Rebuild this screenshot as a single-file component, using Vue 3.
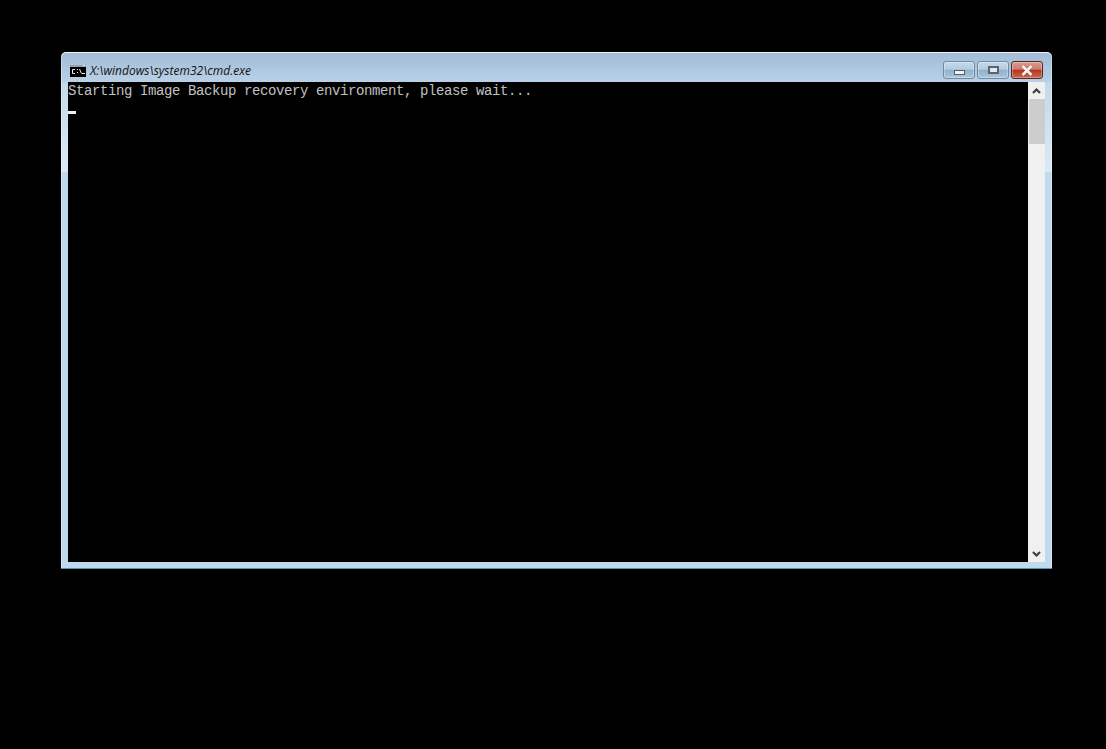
<script setup>
const line = 'Starting Image Backup recovery environment, please wait...'
const title = 'X:\\windows\\system32\\cmd.exe'
</script>

<template>
  <div class="screen">
    <div class="window">
      <div class="titlebar">
        <svg class="appicon" width="16" height="12" viewBox="0 0 16 12">
          <rect x="0" y="0" width="16" height="12" fill="#000" />
          <rect x="0" y="0" width="16" height="2" fill="#9aa2ab" />
          <rect x="13" y="0" width="2" height="1" fill="#e8e8e8" />
          <path d="M5 4.5H2.5v4H5" fill="none" stroke="#eee" stroke-width="1" />
          <path d="M7 4.5h1M7 7.5h1M9.5 4l2 4.5M12 8.5h3" fill="none" stroke="#eee" stroke-width="1" />
        </svg>
        <span class="title">{{ title }}</span>
        <div class="controls">
          <div class="btn minimize"><span class="min-glyph"></span></div>
          <div class="btn maximize"><span class="max-glyph"></span></div>
          <div class="btn close">
            <svg width="16" height="11" viewBox="0 0 16 11">
              <path d="M3.5 1 L12.5 10 M12.5 1 L3.5 10" stroke="#5a4a48" stroke-width="3.6" fill="none" opacity=".45" />
              <path d="M3.5 1 L12.5 10 M12.5 1 L3.5 10" stroke="#f6f2f0" stroke-width="2.6" fill="none" />
            </svg>
          </div>
        </div>
      </div>
      <div class="client">
        <div class="console">
          <div class="text">{{ line }}</div>
          <div class="cursor"></div>
        </div>
        <div class="scrollbar">
          <div class="arrow">
            <svg width="9" height="6" viewBox="0 0 9 6"><path d="M1 5 L4.5 1.5 L8 5" stroke="#404040" stroke-width="2.2" fill="none" /></svg>
          </div>
          <div class="thumb"></div>
          <div class="track"></div>
          <div class="arrow">
            <svg width="9" height="6" viewBox="0 0 9 6"><path d="M1 1 L4.5 4.5 L8 1" stroke="#404040" stroke-width="2.2" fill="none" /></svg>
          </div>
        </div>
      </div>
    </div>
  </div>
</template>

<style>
html, body { margin: 0; background: #000; }
</style>

<style scoped>
.screen {
  width: 1106px;
  height: 749px;
  background: #000;
  padding: 52px 0 0 61px;
  box-sizing: border-box;
  overflow: hidden;
}
.window {
  width: 991px;
  height: 517px;
  box-sizing: border-box;
  padding: 0 7px 6px;
  border-radius: 5px 5px 0 0;
  border-top: 1px solid #eef3f8;
  border-bottom: 1px solid #4f9aa8;
  background: linear-gradient(180deg, #a2bcd8 0, #b9d1e6 29px, #c3d9ea 30px, #dde9f3 118px, #c0daed 120px, #c0daed 100%);
  box-shadow: inset 1px 0 0 rgba(255,255,255,.35), inset -1px 0 0 rgba(255,255,255,.35);
  display: flex;
  flex-direction: column;
}
.titlebar {
  height: 29px;
  flex: none;
  display: flex;
  align-items: center;
  box-sizing: border-box;
  padding-top: 6px;
}
.appicon { margin: 0 4px 0 2px; flex: none; }
.title {
  font-family: "Open Sans", "Liberation Sans", sans-serif;
  font-style: italic;
  font-size: 12px;
  color: #111;
  white-space: nowrap;
}
.controls {
  margin-left: auto;
  margin-right: 2px;
  display: flex;
  gap: 2px;
  margin-top: -1px;
}
.btn {
  height: 18px;
  box-sizing: border-box;
  border: 1px solid #6f8aa3;
  border-radius: 3px;
  display: flex;
  align-items: center;
  justify-content: center;
  background: linear-gradient(180deg, #c6d9ea 0, #b4cce1 45%, #92b1cb 52%, #adc7dd 100%);
  box-shadow: inset 0 0 0 1px rgba(255,255,255,.3);
}
.minimize { width: 32px; }
.maximize { width: 32px; }
.close {
  width: 32px;
  border-color: #4f2a2a;
  background: linear-gradient(180deg, #dc9a8e 0, #cf7c6c 45%, #b8341f 52%, #cb6a52 100%);
}
.min-glyph {
  width: 11px;
  height: 5px;
  margin-top: 5px;
  box-sizing: border-box;
  border: 1px solid #555c66;
  background: #f4f4f4;
}
.max-glyph {
  width: 11px;
  height: 8px;
  box-sizing: border-box;
  border: 2px solid #5c636c;
  background: #dfe8f0;
}
.client {
  flex: 1;
  display: flex;
  min-height: 0;
}
.console {
  flex: 1;
  background: #000;
  min-width: 0;
  color: #c0c0c0;
  font-family: "Liberation Mono", "DejaVu Sans Mono", monospace;
  font-size: 14px;
  letter-spacing: -0.4px;
  line-height: 16px;
  padding-top: 1px;
  box-sizing: border-box;
}
.text { white-space: pre; }
.cursor {
  width: 8px;
  height: 3px;
  background: #f0f0f0;
  margin-top: 12px;
}
.scrollbar {
  width: 17px;
  flex: none;
  background: #f0f0f0;
  display: flex;
  flex-direction: column;
}
.arrow {
  height: 17px;
  flex: none;
  display: flex;
  align-items: center;
  justify-content: center;
}
.thumb {
  height: 45px;
  flex: none;
  margin: 0 0 0 1px;
  background: #cdcdcd;
}
.track { flex: 1; }
</style>
